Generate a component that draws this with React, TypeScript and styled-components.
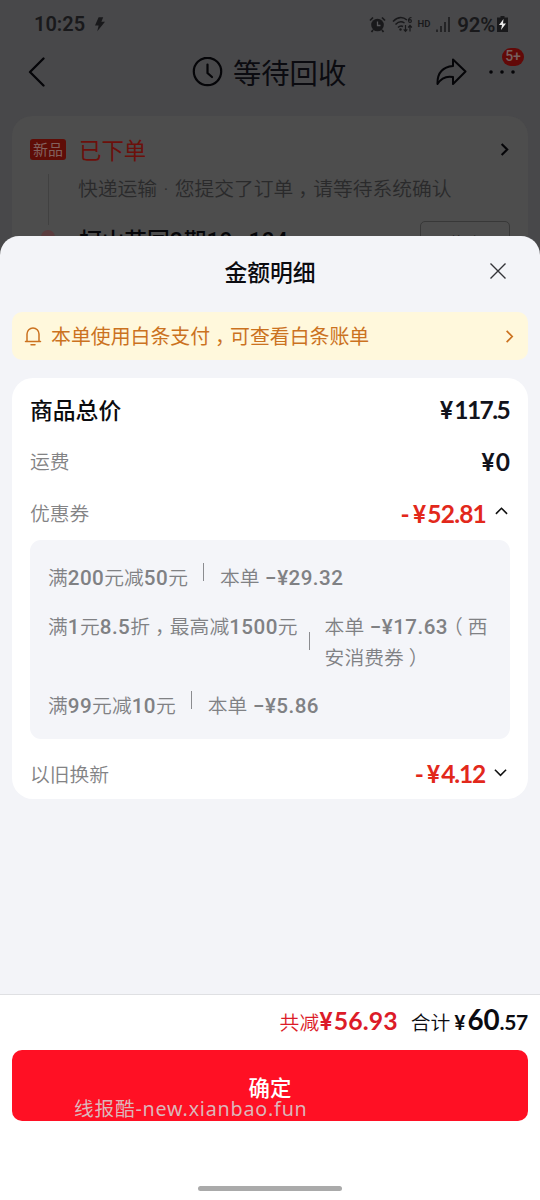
import React from 'react';
import styled, { createGlobalStyle } from 'styled-components';

const Global = createGlobalStyle`
  * { box-sizing: border-box; }
  body { margin: 0; background: #48484a; }
`;

const Screen = styled.main`
  position: relative;
  width: 540px;
  height: 1200px;
  overflow: hidden;
  background: #48484a;
  color: #0b0b10;
  font-family: Roboto, 'Noto Sans CJK SC', sans-serif;
  white-space: nowrap;
`;

/* ---------- dimmed order page ---------- */

const StatusBar = styled.div`
  display: flex;
  align-items: center;
  height: 48px;
  padding: 0 32px 0 34px;
  color: #19191b;
  font: 600 20px/24px Roboto, sans-serif;
`;
const BoltSlot = styled.span`
  display: flex;
  margin-left: 10px;
`;
const StatusIcons = styled.div`
  display: flex;
  align-items: center;
  margin-left: auto;
`;
const WifiSlot = styled.span`
  display: flex;
  margin-left: 6px;
`;
const HdMark = styled.span`
  font: 600 9.5px/12px Roboto, sans-serif;
  margin: 0 6px 0 4px;
`;
const Percent = styled.span`
  margin: 1px 2px 0 7px;
  font-size: 20.5px;
  letter-spacing: -0.3px;
`;

const NavBar = styled.header`
  display: flex;
  align-items: center;
  height: 48px;
  padding: 0 24px 0 28px;
`;
const NavTitle = styled.h1`
  display: flex;
  align-items: center;
  gap: 10px;
  margin: 0 0 0 146px;
  font: 400 28.3px/40px 'Noto Sans CJK SC', sans-serif;
`;
const NavActions = styled.div`
  display: flex;
  align-items: center;
  gap: 21px;
  margin-left: auto;
`;
const More = styled.div`
  position: relative;
  display: flex;
`;
const CountBadge = styled.span`
  position: absolute;
  left: 13px;
  top: -22px;
  width: 22px;
  height: 18px;
  border-radius: 9px;
  background: #620908;
  color: #77605f;
  text-align: center;
  font: 500 14px/17px Roboto, sans-serif;
`;

const OrderCard = styled.section`
  display: grid;
  grid-template-columns: 36px 1fr;
  column-gap: 13px;
  margin: 20px 12px 0;
  padding: 17px 18px 0;
  height: 200px;
  border-radius: 20px;
  background: #4d4d4d;
  align-content: start;
`;
const Rail = styled.div`
  display: flex;
  flex-direction: column;
  align-items: center;
`;
const NewTag = styled.span`
  width: 36px;
  height: 21px;
  margin-top: 6px;
  border-radius: 3px;
  background: #5f0d07;
  color: #82605d;
  text-align: center;
  font: 400 15px/20px 'Noto Sans CJK SC', sans-serif;
`;
const RailLine = styled.span`
  width: 1px;
  height: 51px;
  margin-top: 14px;
  background: #414141;
`;
const RailDot = styled.span`
  width: 14px;
  height: 14px;
  margin-top: 5px;
  border-radius: 50%;
  background: #5a3c3e;
`;
const OrderStatus = styled.div`
  display: flex;
  align-items: center;
  justify-content: space-between;
  height: 32px;
  color: #6c100b;
  font: 400 22.4px/32px 'Noto Sans CJK SC', sans-serif;
`;
const OrderNote = styled.p`
  margin: 8px 0 0 -1px;
  color: #2a2a2b;
  font: 350 19.8px/30px 'Noto Sans CJK SC', sans-serif;
`;
const MidDot = styled.span`
  display: inline-block;
  width: 17.5px;
  text-align: center;
  font-family: Roboto, sans-serif;
`;
const AddressRow = styled.div`
  display: flex;
  justify-content: space-between;
  margin-top: 16px;
  font: 500 22.7px/38px 'Noto Sans CJK SC', sans-serif;
  color: #050508;
`;
const HouseNumber = styled.span`
  font: 500 23px/38px Roboto, sans-serif;
  margin-right: 1px;
`;
const Dash = styled.span`
  margin: 0 4px;
`;
const EditButton = styled.button`
  width: 90px;
  height: 42px;
  padding: 0;
  border: 1px solid #383838;
  border-radius: 5px;
  background: none;
  color: #151517;
  font: 400 15.5px/40px 'Noto Sans CJK SC', sans-serif;
`;

/* ---------- bottom sheet ---------- */

const Sheet = styled.section`
  position: absolute;
  left: 0;
  right: 0;
  top: 235.5px;
  bottom: 0;
  display: flex;
  flex-direction: column;
  border-radius: 19px 19px 0 0;
  background: #f3f4f8;
`;
const SheetHeader = styled.header`
  display: grid;
  grid-template-columns: 36px 1fr 36px;
  align-items: center;
  height: 76.5px;
  padding: 0 24px 3px;
`;
const SheetTitle = styled.h2`
  grid-column: 2;
  margin: 0;
  text-align: center;
  font: 500 22.8px/34px 'Noto Sans CJK SC', sans-serif;
`;
const CloseSlot = styled.span`
  display: flex;
  justify-content: center;
  margin-top: -2px;
`;
const Notice = styled.div`
  display: flex;
  align-items: center;
  height: 48px;
  margin: 0 12px;
  padding: 0 13px 0 12px;
  border-radius: 10px;
  background: #fff8dc;
  color: #cb721f;
  font: 400 19.9px/30px 'Noto Sans CJK SC', sans-serif;
`;
const NoticeText = styled.span`
  flex: 1;
  margin-left: 9px;
`;
const Card = styled.div`
  display: flex;
  flex-direction: column;
  height: 421px;
  margin: 18px 12px 0;
  padding: 6px 18px 0;
  border-radius: 21px;
  background: #fff;
`;
const Row = styled.div<{ $h: number; $top?: number }>`
  display: flex;
  flex: none;
  align-items: center;
  justify-content: space-between;
  height: ${(p) => p.$h}px;
  padding-top: ${(p) => p.$top ?? 0}px;
`;
const Label = styled.span<{ $strong?: boolean }>`
  margin-top: -1px;
  color: ${(p) => (p.$strong ? '#0b0b0e' : '#838385')};
  font: ${(p) => (p.$strong ? '500 22.8px' : '350 19.8px')}/30px 'Noto Sans CJK SC', sans-serif;
`;
const Price = styled.span<{ $red?: boolean; $ls?: number; $end?: number }>`
  display: flex;
  align-items: baseline;
  margin: 1px ${(p) => p.$end ?? 0}px 0 0;
  color: ${(p) => (p.$red ? '#e2281b' : '#12131c')};
  font: 700 24.5px/30px Lato, sans-serif;
  letter-spacing: ${(p) => p.$ls ?? 0}px;
`;
const Yen = styled.span<{ $size?: number }>`
  display: inline-block;
  margin-right: 1px;
  font: 600 ${(p) => p.$size ?? 24}px/30px Inter, sans-serif;
  letter-spacing: 0;
`;
const Minus = styled.span`
  margin-right: 4px;
`;
const ChevronSlot = styled.span`
  display: flex;
  align-self: center;
  margin: -5px 2px 0 9px;
`;
const Coupons = styled.div`
  flex: none;
  height: 199px;
  padding: 22px 15px 0 18px;
  border-radius: 11px;
  background: #f4f5f9;
  color: #808184;
  font: 500 20.6px/30px Roboto, 'Noto Sans CJK SC', sans-serif;
  letter-spacing: 0.45px;
`;
const Coupon = styled.div<{ $gap?: number }>`
  display: flex;
  margin-bottom: ${(p) => p.$gap ?? 0}px;
`;
const Han = styled.span`
  font: 350 19.8px/30px 'Noto Sans CJK SC', sans-serif;
  letter-spacing: 0;
`;
const Divider = styled.i<{ $drop?: boolean }>`
  flex: none;
  width: 1px;
  height: 18px;
  margin: ${(p) => (p.$drop ? '21px 15px 0 11px' : '1px 16px 0 15px')};
  background: #8b8c90;
`;
/* full-width mark drawn in the middle of its cell */
const Mark = styled.span`
  display: inline-block;
  width: 1em;
  text-align: center;
  font-feature-settings: 'halt';
`;

const Footer = styled.footer`
  display: flex;
  flex-direction: column;
  margin-top: auto;
  height: 206px;
  padding: 6px 12px 0;
  border-top: 1px solid #dfe0e3;
  background: #fff;
`;
const Totals = styled.div`
  display: flex;
  justify-content: flex-end;
  align-items: baseline;
  height: 49px;
  font: 350 19.8px/38px 'Noto Sans CJK SC', sans-serif;
`;
const Saved = styled.span`
  margin-right: 13px;
  color: #dc1b28;
`;
const Amount = styled.b<{ $size: number; $ls?: number }>`
  font: 700 ${(p) => p.$size}px/38px Lato, sans-serif;
  letter-spacing: ${(p) => p.$ls ?? 0}px;
`;
const TotalYen = styled(Yen)`
  margin: 0 2px 0 4px;
`;
const Confirm = styled.button`
  position: relative;
  height: 71px;
  flex: none;
  padding: 2px 0 0;
  border: 0;
  border-radius: 10px;
  background: #ff1024;
  color: #fff;
  font: 500 21.4px/32px 'Noto Sans CJK SC', sans-serif;
`;
const Watermark = styled.span`
  position: absolute;
  left: 62px;
  top: 44px;
  color: rgba(214, 214, 214, 0.85);
  font: 400 19.7px/30px 'Noto Sans', 'Noto Sans CJK SC', sans-serif;
  letter-spacing: 0.8px;
`;
const HomeBar = styled.i`
  width: 144px;
  height: 5px;
  margin: 65px auto 0;
  border-radius: 3px;
  background: #aaa;
`;

const Chevron = ({ dir, size = 13, color = '#111', w = 1.7 }: { dir: 'up' | 'down' | 'right'; size?: number; color?: string; w?: number }) => {
  const d = { up: 'M1 9.5 7 3.5l6 6', down: 'M1 4l6 6 6-6', right: 'M5 1l6 6-6 6' }[dir];
  return (
    <svg width={size} height={size} viewBox="0 0 14 14" fill="none" stroke={color} strokeWidth={w}>
      <path d={d} />
    </svg>
  );
};

const Bolt = () => (
  <svg width="10" height="15" viewBox="0 0 11 16" fill="#19191b">
    <path d="M4 0h5L7 5h4L2.500 15.500 4 9H0z" />
  </svg>
);

const AlarmIcon = () => (
  <svg width="17" height="17" viewBox="0 0 17 17" fill="none" stroke="#19191b">
    <circle cx="8.500" cy="9" r="6.300" fill="#19191b" stroke="none" />
    <path d="M1 4.500 4 1.500M16 4.500l-3-3M4 14l-1.500 2M13 14l1.500 2" strokeWidth="1.700" />
    <path d="M8.500 5.500V9.500h3" stroke="#57575a" strokeWidth="1.300" />
  </svg>
);

const WifiIcon = () => (
  <svg width="21" height="17" viewBox="0 0 21 17" fill="none" stroke="#19191b" strokeWidth="1.500">
    <path d="M1 5.500Q8 -1.500 15 4M3.500 8.500Q8 4 12.500 7M6 11.500Q8.500 9 11 10.500" />
    <circle cx="8.500" cy="13.500" r="1.200" fill="#19191b" stroke="none" />
    <path d="M13.500 9v6M11.700 13.300l1.800 2 1.800-2M18 15.500V9.500M16.200 11.500l1.800-2 1.800 2M19.500 1.500q-3 0-3 3.500" strokeWidth="1.200" />
    <circle cx="18" cy="5" r="1.400" strokeWidth="1.100" />
  </svg>
);

const SignalIcon = () => (
  <svg width="14" height="15" viewBox="0 0 14 15" stroke="#19191b" strokeWidth="1.500">
    <path d="M1 12.500V15M5 9v6M9 5v10M13 0v15" />
  </svg>
);

const BatteryIcon = () => (
  <svg width="11" height="16" viewBox="0 0 11 16">
    <path d="M3.500 0h4v1.500H11V16H0V1.500h3.500z" fill="#19191b" />
    <path d="M6.500 3 2 9h3l-1 5 5-6.500H6z" fill="#e8e8e8" />
  </svg>
);

const App = () => (
  <Screen>
    <Global />
    <StatusBar>
      10:25
      <BoltSlot><Bolt /></BoltSlot>
      <StatusIcons>
        <AlarmIcon />
        <WifiSlot><WifiIcon /></WifiSlot>
        <HdMark>HD</HdMark>
        <SignalIcon />
        <Percent>92%</Percent>
        <BatteryIcon />
      </StatusIcons>
    </StatusBar>

    <NavBar>
      <svg width="18" height="30" viewBox="0 0 18 30" fill="none" stroke="#050508" strokeWidth="2.300" strokeLinecap="round" strokeLinejoin="round">
        <path d="M15.500 1.500 2 15l13.500 13.500" />
      </svg>
      <NavTitle>
        <svg width="31" height="31" viewBox="0 0 31 31" fill="none" stroke="#050508" strokeWidth="2.200" strokeLinecap="round">
          <circle cx="15.500" cy="14.500" r="13.700" />
          <path d="M15.500 7.500v8.500l4.500 4" />
        </svg>
        等待回收
      </NavTitle>
      <NavActions>
        <svg width="32" height="28" viewBox="0 0 32 28" fill="none" stroke="#050508" strokeWidth="2" strokeLinejoin="round">
          <path d="M17 1.500 29.500 13.500 17 26v-7Q7 17 1.500 26 1 9.500 17 8z" />
        </svg>
        <More>
          <svg width="27" height="4" viewBox="0 0 27 4" fill="#050508">
            <circle cx="2" cy="2" r="1.800" />
            <circle cx="13" cy="2" r="1.800" />
            <circle cx="24" cy="2" r="1.800" />
          </svg>
          <CountBadge>5+</CountBadge>
        </More>
      </NavActions>
    </NavBar>

    <OrderCard>
      <Rail>
        <NewTag>新品</NewTag>
        <RailLine />
        <RailDot />
      </Rail>
      <div>
        <OrderStatus>
          已下单
          <Chevron dir="right" color="#050508" w={2.3} />
        </OrderStatus>
        <OrderNote>快递运输<MidDot>·</MidDot>您提交了订单<Mark>，</Mark>请等待系统确认</OrderNote>
        <AddressRow>
          <span>
            柯山花园<HouseNumber>2</HouseNumber>期<HouseNumber>19<Dash>-</Dash>104</HouseNumber>
          </span>
          <EditButton>修改</EditButton>
        </AddressRow>
      </div>
    </OrderCard>

    <Sheet>
      <SheetHeader>
        <SheetTitle>金额明细</SheetTitle>
        <CloseSlot>
          <svg width="16" height="16" viewBox="0 0 16 16" stroke="#333338" strokeWidth="1.400">
            <path d="M.5.5l15 15M15.500.5l-15 15" />
          </svg>
        </CloseSlot>
      </SheetHeader>

      <Notice>
        <svg width="18" height="20" viewBox="0 0 18 20" fill="none" stroke="#cb721f" strokeWidth="1.500" strokeLinecap="round">
          <path d="M3 15.500V8a6 6 0 0 1 12 0v7.500M1.500 15.500h15M7 18.800h4" />
        </svg>
        <NoticeText>本单使用白条支付<Mark>，</Mark>可查看白条账单</NoticeText>
        <Chevron dir="right" color="#cb721f" w={1.8} />
      </Notice>

      <Card>
        <Row $h={52}>
          <Label $strong>商品总价</Label>
          <Price $ls={-1.6} $end={1}><Yen>¥</Yen>117.5</Price>
        </Row>
        <Row $h={51}>
          <Label>运费</Label>
          <Price><Yen>¥</Yen>0</Price>
        </Row>
        <Row $h={53}>
          <Label>优惠券</Label>
          <Price $red $ls={-0.8}>
            <Minus>-</Minus><Yen>¥</Yen>52.81
            <ChevronSlot><Chevron dir="up" /></ChevronSlot>
          </Price>
        </Row>
        <Coupons>
          <Coupon $gap={18}>
            <span><Han>满</Han>200<Han>元减</Han>50<Han>元</Han></span>
            <Divider />
            <span><Han>本单</Han> −¥29.32</span>
          </Coupon>
          <Coupon $gap={17}>
            <span><Han>满</Han>1<Han>元</Han>8.5<Han>折<Mark>，</Mark>最高减</Han>1500<Han>元</Han></span>
            <Divider $drop />
            <span>
              <Han>本单</Han> −¥17.63<Han><Mark>（</Mark>西</Han>
              <br />
              <Han>安消费券<Mark>）</Mark></Han>
            </span>
          </Coupon>
          <Coupon>
            <span><Han>满</Han>99<Han>元减</Han>10<Han>元</Han></span>
            <Divider />
            <span><Han>本单</Han> −¥5.86</span>
          </Coupon>
        </Coupons>
        <Row $h={60} $top={10}>
          <Label>以旧换新</Label>
          <Price $red $ls={-1.2} $end={1}>
            <Minus>-</Minus><Yen>¥</Yen>4.12
            <ChevronSlot><Chevron dir="down" /></ChevronSlot>
          </Price>
        </Row>
      </Card>

      <Footer>
        <Totals>
          <Saved>共减<Yen>¥</Yen><Amount $size={24.8} $ls={0.1}>56.93</Amount></Saved>
          合计<TotalYen $size={20}>¥</TotalYen><Amount $size={27.8} $ls={-0.1}>60</Amount><Amount $size={21} $ls={-0.3}>.57</Amount>
        </Totals>
        <Confirm>
          确定
          <Watermark>线报酷-new.xianbao.fun</Watermark>
        </Confirm>
        <HomeBar />
      </Footer>
    </Sheet>
  </Screen>
);

export default App;
